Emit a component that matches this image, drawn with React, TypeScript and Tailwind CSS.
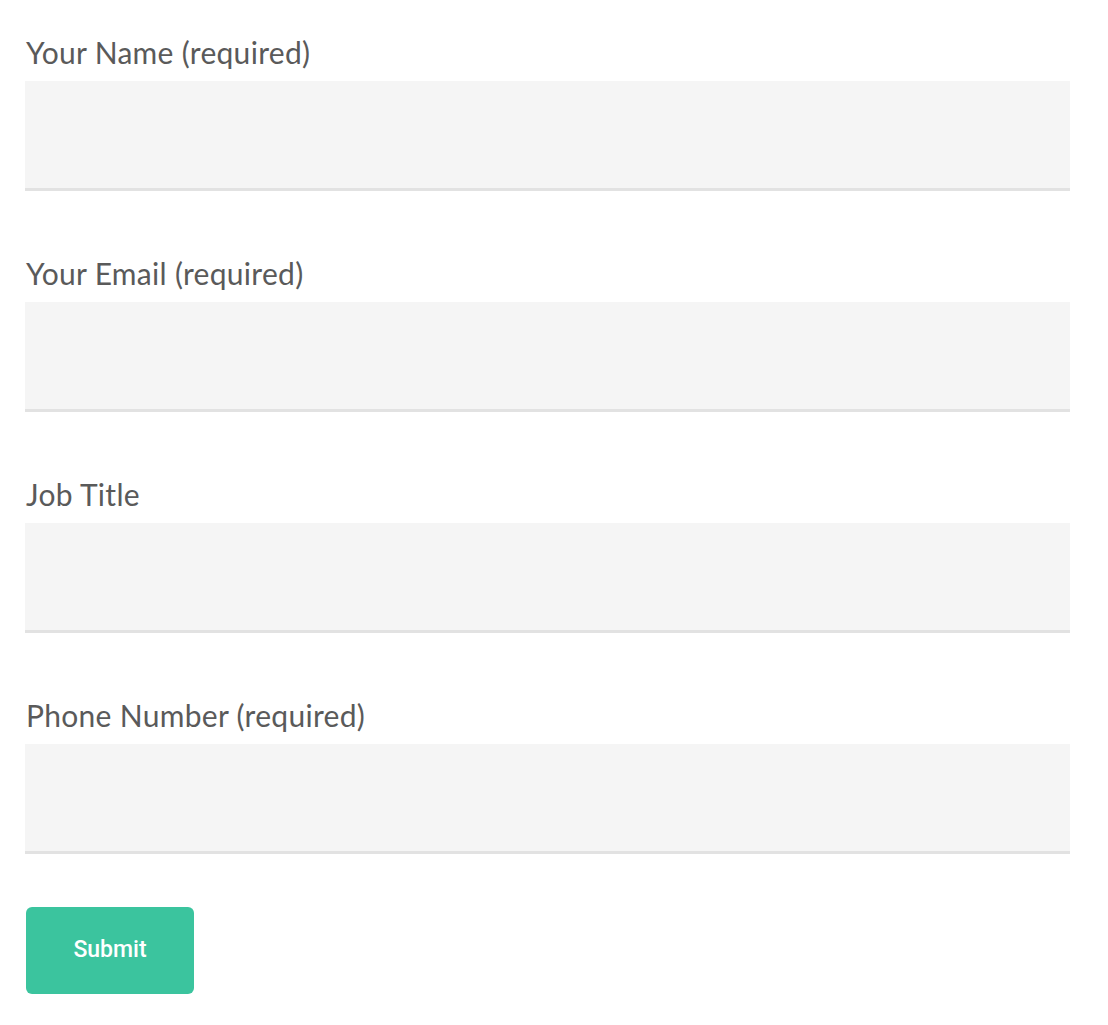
import React from "react";

const fields = ["Your Name (required)", "Your Email (required)", "Job Title", "Phone Number (required)"];

export default function App() {
  return (
    <div className="bg-white min-h-[1025px] px-[25px] pt-[32px]" style={{ fontFamily: "Lato, 'Open Sans', sans-serif" }}>
      <form className="w-[1045px] flex flex-col">
        {fields.map((f, i) => (
          <div key={f} className={i === 0 ? "" : "mt-[62px]"}>
            <label className="block text-[30px] leading-[40px] tracking-[0.3px] text-[#5a5a5a] pl-[1px]">{f}</label>
            <input className="mt-[9px] block w-full h-[110px] bg-[#f5f5f5] border-b-[3px] border-[#e2e2e2] outline-none" />
          </div>
        ))}
        <div className="mt-[53px]">
          <button
            type="button"
            className="w-[168px] h-[87px] ml-[1px] rounded-[6px] bg-[#3bc49e] text-white text-[23px] font-medium"
            style={{ fontFamily: "Roboto, sans-serif" }}
          >
            Submit
          </button>
        </div>
      </form>
    </div>
  );
}
